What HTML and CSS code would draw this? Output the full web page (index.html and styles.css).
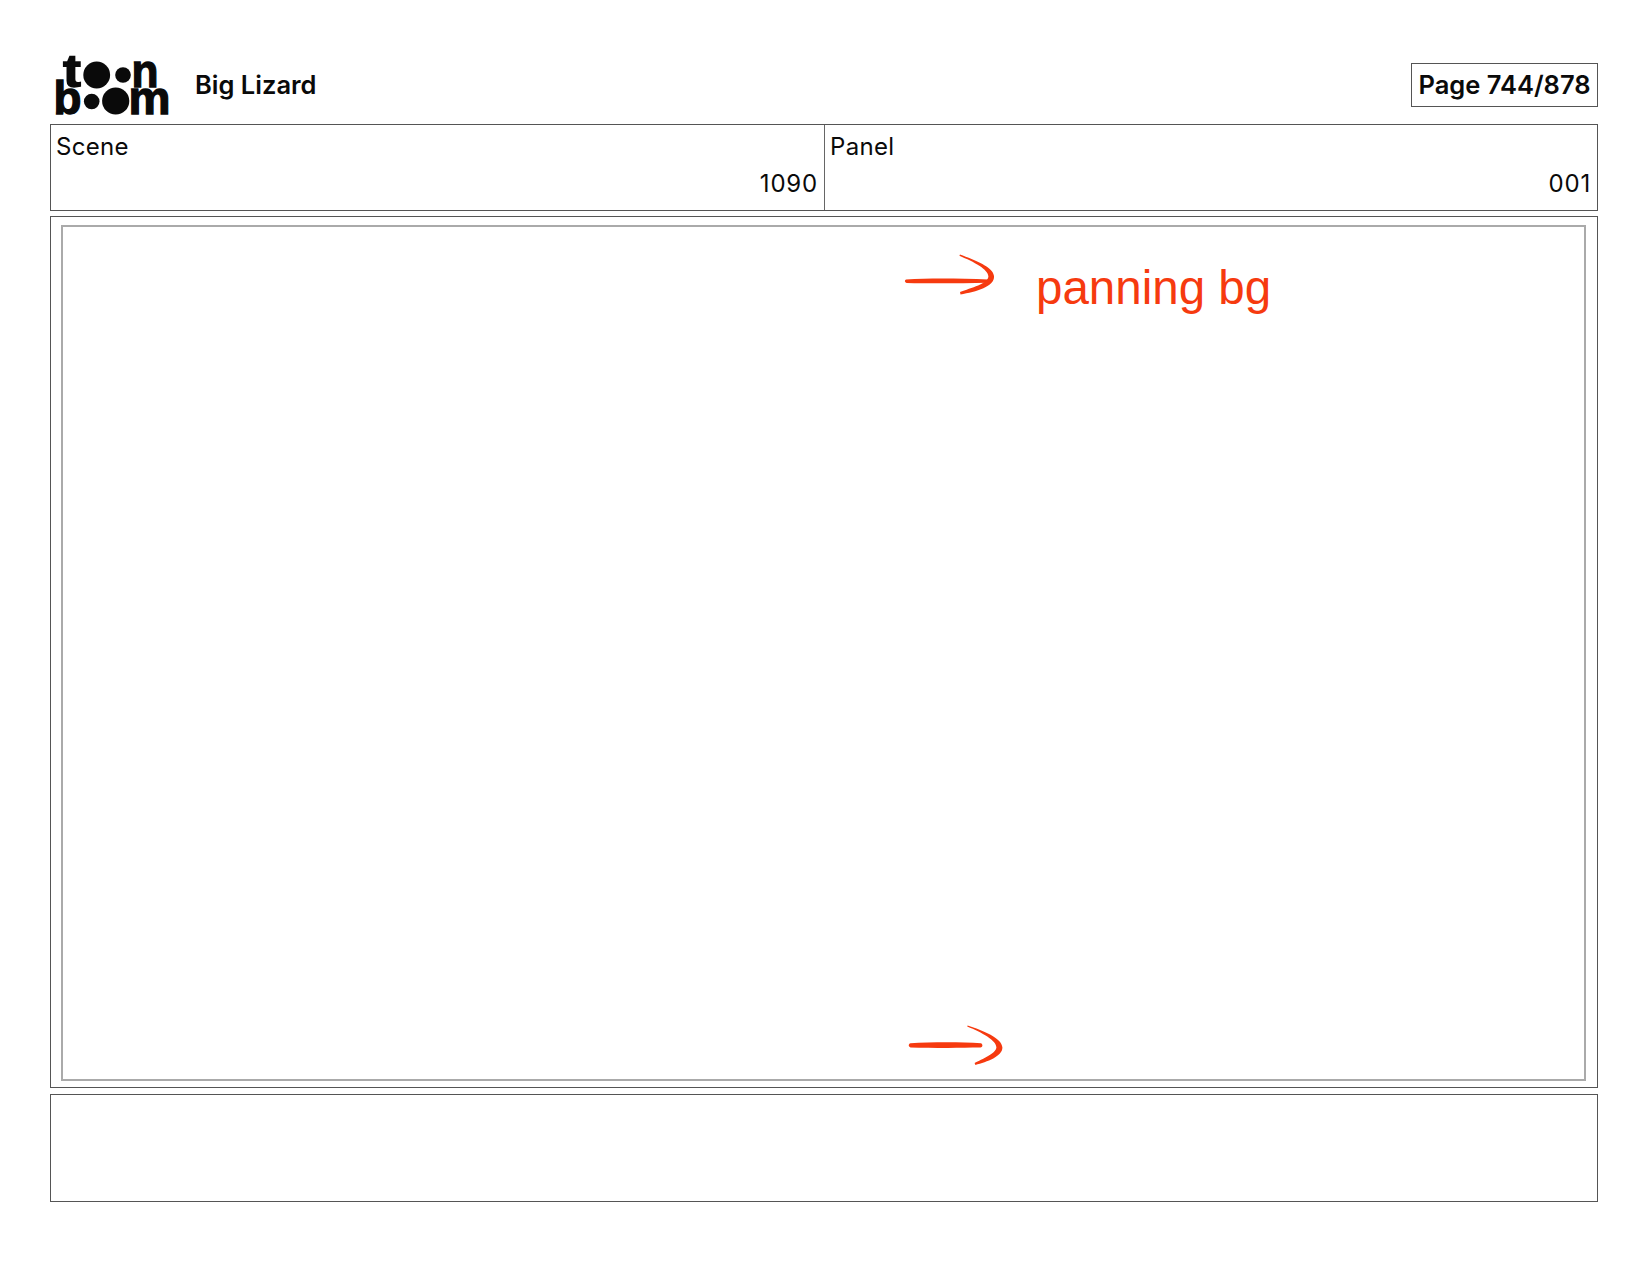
FILE: index.html
```html
<!DOCTYPE html>
<html lang="en">
<head>
<meta charset="utf-8">
<title>Big Lizard - Page 744/878</title>
<link rel="stylesheet" href="styles.css">
</head>
<body>
<main class="page">
  <header class="top">
    <div class="brand">
      <svg class="logo" viewBox="0 -10 120 86" aria-label="toon boom">
        <text class="logo-t" x="9" y="34.7" textLength="18" lengthAdjust="spacingAndGlyphs">t</text>
        <circle cx="42.7" cy="23" r="13.4"/>
        <circle cx="69" cy="23" r="7.8"/>
        <text class="logo-t" x="77.5" y="34.7" textLength="27" lengthAdjust="spacingAndGlyphs">n</text>
        <text class="logo-t" x="-0.5" y="61.5" textLength="28" lengthAdjust="spacingAndGlyphs">b</text>
        <circle cx="37.7" cy="49.5" r="7.8"/>
        <circle cx="61.7" cy="49" r="13.6"/>
        <text class="logo-t" x="74.5" y="61.5" textLength="42" lengthAdjust="spacingAndGlyphs">m</text>
      </svg>
      <span class="title">Big Lizard</span>
    </div>
    <div class="pageno">Page 744/878</div>
  </header>
  <section class="meta">
    <div class="cell">
      <div class="label">Scene</div>
      <div class="value">1090</div>
    </div>
    <div class="cell">
      <div class="label">Panel</div>
      <div class="value">001</div>
    </div>
  </section>
  <section class="panel">
    <div class="frame"></div>
    <svg class="art" viewBox="0 0 1548 872">
      <path class="ink" d="M856 62.4 C880 61 910 61.4 938 62.4 L938 65.8 C910 66.4 880 66.6 856.6 66 C854.4 65.2 854.4 63.2 856 62.4Z"/>
      <path class="ink" d="M910 37.4 C925 43 943.6 50 944 59 C945 69.5 926 75 910.5 77.4 L910 75 C921 71 938 67 938.4 59.6 C938.4 52.4 924 45 909.4 38.8Z"/>
      <text class="note" x="986" y="87">panning bg</text>
      <path class="ink" d="M860.5 826.2 C880 825.2 910 825 931 826.2 C933.4 827.8 932.4 830 930.5 830.6 C908 831 880 831 860.5 830.4 C858.2 829.4 858.2 827 860.5 826.2Z"/>
      <path class="ink" d="M917.6 808.6 C933 813.6 952 821 952.4 830.6 C952.6 839.4 937 845 925.4 848 L924.6 846 C932 842 946 836.4 946.4 830.4 C946.4 823.6 932 815.6 917.2 809.6Z"/>
    </svg>
  </section>
  <section class="notes"></section>
</main>
</body>
</html>
```
FILE: styles.css
```css
html, body {
  margin: 0;
  padding: 0;
  background: #fff;
}
body {
  font-family: Inter, "Noto Sans", "Liberation Sans", sans-serif;
  color: #0a0a0a;
}
.page {
  width: 1548px;
  margin-left: 50px;
  padding-top: 42px;
}
.top {
  display: flex;
  justify-content: space-between;
  align-items: flex-start;
  height: 82px;
}
.brand {
  display: flex;
  align-items: flex-start;
  height: 76px;
}
.logo {
  width: 120px;
  height: 86px;
  margin-left: 4px;
  flex: none;
}
.logo circle {
  fill: #0a0a0a;
}
.logo-t {
  font-family: "Liberation Sans", sans-serif;
  font-weight: 700;
  font-size: 46px;
  fill: #0a0a0a;
  stroke: #0a0a0a;
  stroke-width: 1.3px;
}
.title {
  margin-left: 21px;
  margin-top: 28px;
  font-size: 25.5px;
  font-weight: 600;
  line-height: 30px;
}
.pageno {
  margin-top: 21px;
  width: 187px;
  height: 44px;
  box-sizing: border-box;
  border: 1px solid #555;
  font-size: 25.5px;
  font-weight: 600;
  line-height: 42px;
  text-align: center;
  white-space: nowrap;
}
.meta {
  display: grid;
  grid-template-columns: 773px 1fr;
  height: 87px;
  box-sizing: border-box;
  border: 1px solid #555;
}
.cell {
  padding: 7px 6px 0 5px;
  font-size: 24px;
  line-height: 30px;
}
.cell + .cell {
  border-left: 1px solid #666;
  padding-left: 5px;
}
.label {
  letter-spacing: 0.3px;
}
.value {
  margin-top: 7px;
  text-align: right;
  letter-spacing: 0.8px;
}
.panel {
  position: relative;
  margin-top: 5px;
  height: 872px;
  box-sizing: border-box;
  border: 1px solid #555;
}
.frame {
  position: absolute;
  left: 10px;
  top: 8px;
  right: 11px;
  bottom: 6px;
  border: 2.5px solid #aaa;
}
.art {
  position: absolute;
  left: -1px;
  top: 0;
  width: 1548px;
  height: 872px;
}
.ink {
  fill: #f63a0f;
}
.note {
  font-family: "Liberation Sans", Arial, sans-serif;
  font-size: 47.5px;
  fill: #f63a0f;
}
.notes {
  margin-top: 6px;
  height: 108px;
  box-sizing: border-box;
  border: 1px solid #555;
}
```
